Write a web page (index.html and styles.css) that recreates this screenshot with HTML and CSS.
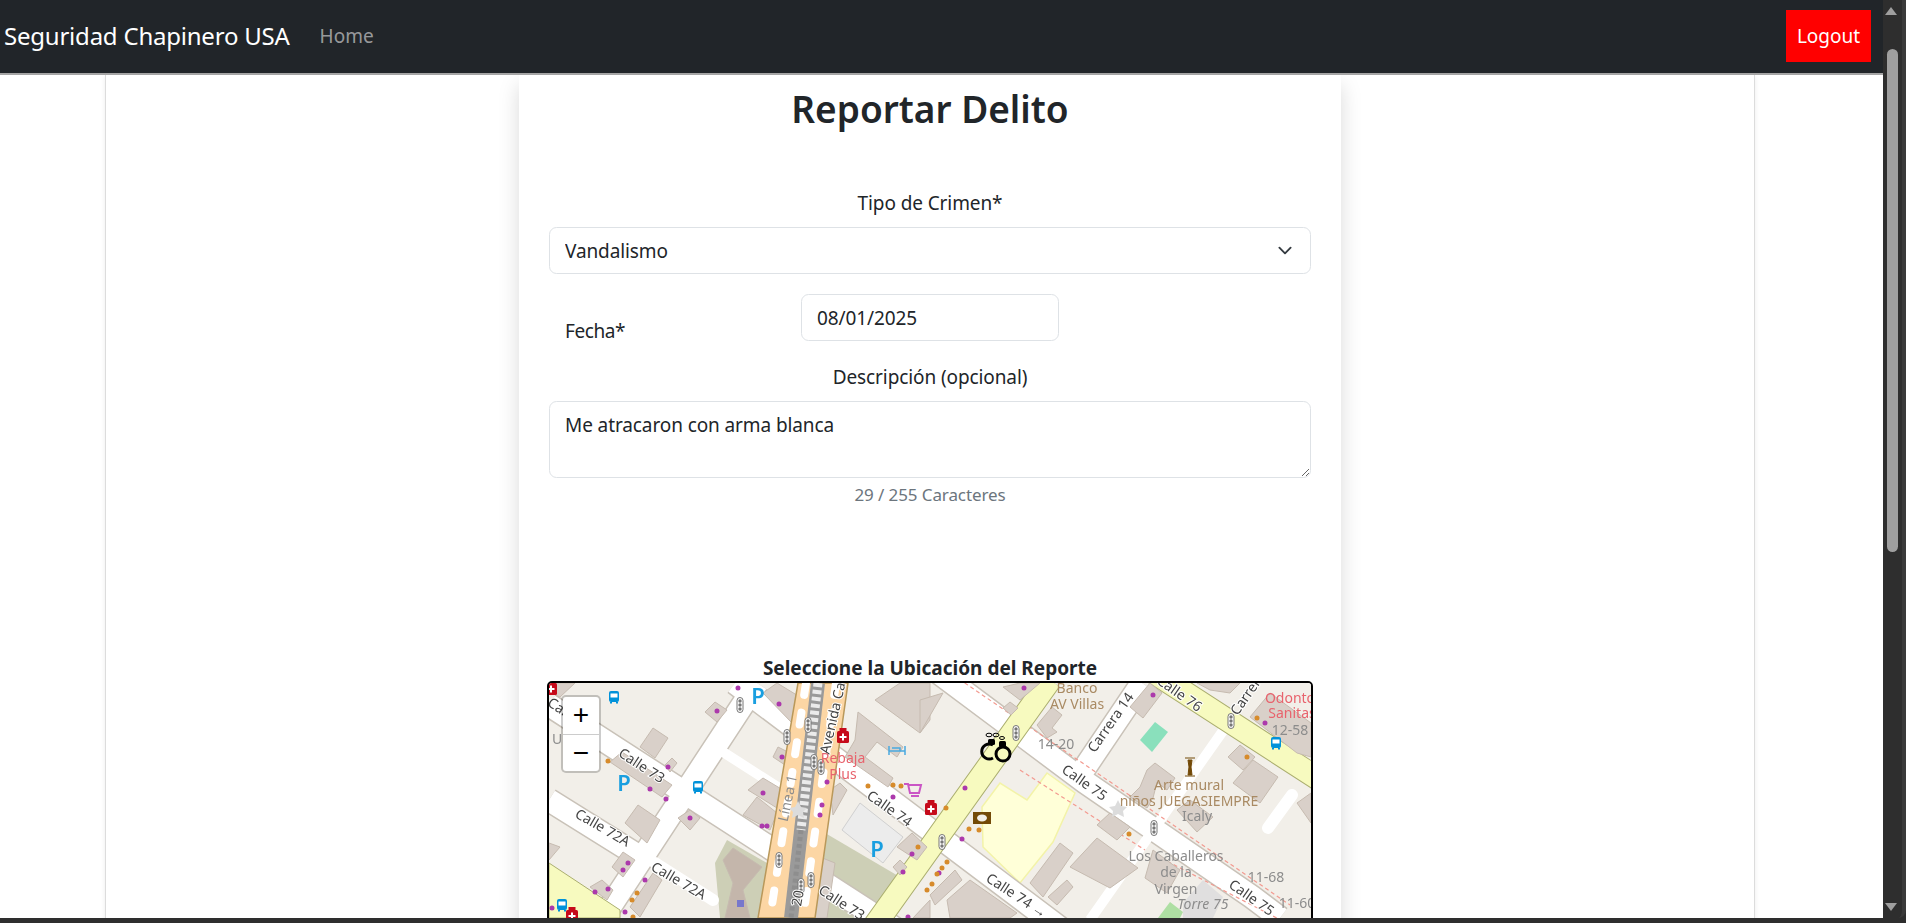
FILE: index.html
```html
<!DOCTYPE html>
<html lang="es">
<head>
  <meta charset="UTF-8" />
  <meta name="viewport" content="width=device-width, initial-scale=1.0"/>
  <title>Reportar Delito</title>
  <link rel="stylesheet" href="styles.css">
</head>
<body>
  <div class="window">
    <div class="viewport">
      <div class="page">
        <nav class="navbar">
          <a class="brand">Seguridad Chapinero USA</a>
          <a class="nav-link">Home</a>
          <button class="logout">Logout</button>
        </nav>

        <main class="content">
          <div class="outer-card">
            <div class="form-card">
              <h2 class="title">Reportar Delito</h2>

              <label class="field-label">Tipo de Crimen*</label>
              <select class="control select-control">
                <option>Vandalismo</option>
              </select>

              <div class="date-row">
                <label class="date-label">Fecha*</label>
                <input class="control date-control" type="text" value="08/01/2025" />
              </div>

              <label class="field-label">Descripción (opcional)</label>
              <textarea class="control text-control">Me atracaron con arma blanca</textarea>
              <div class="counter">29 / 255 Caracteres</div>

              <div class="map-title">Seleccione la Ubicación del Reporte</div>
              <div class="map">
                <svg class="map-tiles" viewBox="549 683 762 235" width="762" height="235">
                  <defs>
                    <g id="signal">
                      <rect x="-3" y="-7.5" width="6" height="15" rx="3" fill="#fff" stroke="#777" stroke-width="1"/>
                      <circle cy="-4" r="1.7" fill="#777"/><circle r="1.7" fill="#777"/><circle cy="4" r="1.7" fill="#777"/>
                    </g>
                    <g id="bus">
                      <rect x="-5" y="-6" width="10" height="11" rx="2" fill="#0092da"/>
                      <rect x="-3.5" y="-3.5" width="7" height="4" fill="#fff"/>
                      <rect x="-4" y="5" width="2" height="1.5" fill="#0092da"/><rect x="2" y="5" width="2" height="1.5" fill="#0092da"/>
                    </g>
                    <g id="pharmacy">
                      <rect x="-6" y="-5" width="12" height="12" rx="1.5" fill="#c60a1a"/>
                      <rect x="-3.5" y="-8" width="7" height="3" fill="#c60a1a"/>
                      <path d="M-3.5 1h7M0-2.500v7" stroke="#fff" stroke-width="2"/>
                    </g>
                    <path id="star" d="M0-9 3-3 9-2 5 2 6 8 0 5-6 8-5 2-9-2-3-3Z" fill="#dcdcdc"/>
                  </defs>

                  <rect x="549" y="683" width="762" height="235" fill="#f2efe9"/>

                  <polygon class="green" points="727,840 767,863 760,918 720,918 715,863"/>
                  <polygon class="green" points="820,830 900,877 878,918 810,918"/>
                  <polygon class="school" points="1047,773 1075,793 1053,842 1020,883 983,847 982,807 1000,783 1027,800"/>
                  <polygon points="1140,740 1155,722 1168,732 1152,752" fill="#8ae0bc"/>
                  <polygon points="1158,918 1170,902 1183,912 1180,918" fill="#aedfa3"/>

                  <g class="casing">
                    <path d="M549 705 905 935M735 683 1060 928M757 683 610 907M549 800 645 860M1142 683 1080 775M935 670 1085 782 1252 897 1280 918"/>
                  </g>
                  <g class="road">
                    <path d="M549 705 905 935M735 683 1060 928M757 683 610 907M549 800 645 860M1142 683 1080 775M935 670 1085 782 1252 897 1280 918"/>
                  </g>
                  <path class="road-thin" d="M723 752 790 795M1225 728 1090 920M600 918 640 860"/>
                  <path class="road-end" d="M655 863 713 900"/>
                  <path class="road-end" d="M1292 795 1268 828"/>
                  <path class="dashed" d="M953 675 1100 775 1290 905M1020 770 1145 850M1155 855 1300 930"/>

                  <polygon class="primary" points="549,863 620,910 620,918 549,918"/>
                  <path class="secondary-case" d="M1050 680 875 925M1150 670 1320 780"/>
                  <path class="secondary" d="M1050 680 875 925M1150 670 1320 780"/>

                  <g class="building">
                    <polygon points="549,683 575,683 560,697 549,692"/>
                    <polygon points="640,747 653,728 668,738 655,758"/>
                    <polygon points="705,712 715,702 727,710 717,722"/>
                    <polygon points="665,765 672,758 677,763 670,772"/>
                    <polygon points="875,700 900,683 930,683 930,720 920,733"/>
                    <polygon points="858,712 903,747 897,757 877,742 865,757 893,778 888,787 845,757 855,740"/>
                    <polygon points="920,700 943,693 920,733"/>
                    <polygon points="1003,687 1020,683 1040,683 1020,700"/>
                    <polygon points="1003,708 1010,702 1018,708 1011,715"/>
                    <polygon points="1037,725 1052,707 1062,715 1052,728 1057,732 1047,738"/>
                    <polygon points="1130,707 1150,683 1162,693 1143,718"/>
                    <polygon points="1147,770 1155,763 1175,778 1167,790 1157,782 1153,798 1147,808 1130,797 1140,787"/>
                    <polygon points="1177,810 1190,800 1213,817 1197,832"/>
                    <polygon points="1228,757 1240,745 1255,757 1243,770"/>
                    <polygon points="1233,783 1253,760 1278,777 1260,803"/>
                    <polygon points="1250,717 1270,693 1311,723 1311,757 1297,753"/>
                    <polygon points="1197,683 1240,683 1230,693 1210,690"/>
                    <polygon points="1097,825 1110,813 1130,827 1117,840"/>
                    <polygon points="1070,867 1097,838 1138,868 1110,888"/>
                    <polygon points="1030,883 1060,843 1073,853 1043,897"/>
                    <polygon points="1048,897 1067,880 1073,887 1057,905"/>
                    <polygon points="947,900 970,880 1017,913 1010,918 950,918"/>
                    <polygon points="930,895 955,870 962,880 935,905"/>
                    <polygon points="1153,850 1180,870 1167,893 1145,878"/>
                    <polygon points="1297,803 1311,793 1311,823"/>
                    <polygon points="748,790 763,778 788,793 777,808"/>
                    <polygon points="743,815 757,797 777,813 770,830"/>
                    <polygon points="763,693 777,683 800,697 792,723"/>
                    <polygon points="773,757 778,747 790,753 785,765"/>
                    <polygon points="625,823 638,805 660,820 647,843"/>
                    <polygon points="610,762 622,752 672,785 662,797"/>
                    <polygon points="678,818 690,810 700,818 690,830"/>
                    <polygon points="549,843 560,847 549,860"/>
                    <polygon points="612,867 623,852 635,860 623,877"/>
                    <polygon points="590,887 602,880 613,890 607,900"/>
                    <polygon points="630,907 653,873 662,880 640,917"/>
                    <polygon points="897,847 912,833 927,847 917,860"/>
                    <polygon points="830,790 840,783 847,790 833,815"/>
                    <polygon points="893,867 900,860 907,867 900,875"/>
                    <polygon points="913,918 930,900 930,918"/>
                    <polygon points="820,857 835,863 827,918 810,918"/>
                    <polygon class="building-dark" points="733,848 762,867 743,890 750,918 725,918 733,883 723,860"/>
                  </g>
                  <polygon points="1183,903 1203,880 1223,897 1213,918 1183,918" fill="#e0dfdf"/>
                  <polygon points="842,830 860,803 903,837 883,863" fill="#ececec" stroke="#d0d0d0"/>
                  <rect x="737" y="900" width="7" height="7" fill="#7777cc"/>

                  <polygon class="avenue" points="798,683 848,683 815,918 758,918"/>
                  <path class="lane" d="M806 683 770 918M836 683 803 918"/>
                  <path class="rail" d="M818 683 791 918"/>
                  <path class="rail-ties" d="M818 683 801 830"/>
                  <path class="rail-ties rail-ties-low" d="M801 830 791 918"/>

                  <path class="dots-purple" d="M717 711h0M738 688h0M779 704h0M782 757h0M827 782h0M822 805h0M820 815h0M763 793h0M762 826h0M767 826h0M690 818h0M668 767h0M650 789h0M666 799h0M628 863h0M623 870h0M645 880h0M608 889h0M595 892h0M625 912h0M893 797h0M903 872h0M912 854h0M908 917h0M552 908h0M1024 688h0M1153 695h0M1265 723h0M965 788h0M962 839h0M939 873h0"/>
                  <path class="dots-orange" d="M608 761h0M637 893h0M632 900h0M633 917h0M868 786h0M893 785h0M901 786h0M918 847h0M1247 757h0M1257 718h0M1129 834h0M946 808h0M969 829h0M979 830h0M947 862h0M942 868h0M937 874h0M932 884h0M927 890h0"/>

                  <use href="#signal" transform="translate(740 705)"/>
                  <use href="#signal" transform="translate(787 737)"/>
                  <use href="#signal" transform="translate(808 725)"/>
                  <use href="#signal" transform="translate(814 762)"/>
                  <use href="#signal" transform="translate(821 767)"/>
                  <use href="#signal" transform="translate(779 860)"/>
                  <use href="#signal" transform="translate(811 880)"/>
                  <use href="#signal" transform="translate(801 886)"/>
                  <use href="#signal" transform="translate(1016 733)"/>
                  <use href="#signal" transform="translate(1231 721)"/>
                  <use href="#signal" transform="translate(1154 828)"/>
                  <use href="#signal" transform="translate(942 842)"/>

                  <use href="#bus" transform="translate(614 697)"/>
                  <use href="#bus" transform="translate(698 787)"/>
                  <use href="#bus" transform="translate(562 905)"/>
                  <use href="#bus" transform="translate(1276 743)"/>

                  <use href="#pharmacy" transform="translate(843 736)"/>
                  <use href="#pharmacy" transform="translate(931 808)"/>
                  <use href="#pharmacy" transform="translate(551 688)"/>
                  <use href="#pharmacy" transform="translate(572 915)"/>

                  <use href="#star" transform="translate(798 810)"/>
                  <use href="#star" transform="translate(1118 809)"/>

                  <text class="map-parking" x="758" y="695">P</text>
                  <text class="map-parking" x="624" y="782">P</text>
                  <text class="map-parking" x="877" y="848">P</text>

                  <!-- bed, cart, bank, monument -->
                  <path d="M889 746v9M889 751h16v4M905 746v5M892 748h8v3" fill="none" stroke="#4aa9e0" stroke-width="1.500"/>
                  <path d="M904 784h4l2 9h9l2-8h-13M911 796h8" fill="none" stroke="#ca55c5" stroke-width="2"/>
                  <rect x="973" y="812" width="18" height="12" fill="#734a08"/>
                  <ellipse cx="982" cy="818" rx="5" ry="3.500" fill="#f2efe9"/>
                  <path d="M1185 758h10M1185 776h10M1188 760h4l-1 7 1 8h-4l1-8Z" fill="#734a08" stroke="#734a08"/>

                  <g class="map-street">
                    <text transform="translate(642 765) rotate(33)">Calle 73</text>
                    <text transform="translate(603 827) rotate(30)">Calle 72A</text>
                    <text transform="translate(679 880) rotate(30)">Calle 72A</text>
                    <text transform="translate(842 902) rotate(33)">Calle 73</text>
                    <text transform="translate(890 808) rotate(35)">Calle 74</text>
                    <text transform="translate(1017 895) rotate(33)">Calle 74 →</text>
                    <text transform="translate(1085 782) rotate(35)">Calle 75</text>
                    <text transform="translate(1252 897) rotate(35)">Calle 75</text>
                    <text transform="translate(1180 693) rotate(35)">Calle 76</text>
                    <text transform="translate(1110 722) rotate(-55)">Carrera 14</text>
                    <text transform="translate(1247 693) rotate(-55)">Carrera</text>
                    <text transform="translate(832 718) rotate(-77)">Avenida Ca</text>
                    <text transform="translate(558 706) rotate(33)">Cal</text>
                    <text transform="translate(797 898) rotate(-80)">20</text>
                  </g>
                  <g class="map-grey">
                    <text x="557" y="738">U</text>
                    <text transform="translate(787 798) rotate(-78)">Línea 1</text>
                    <text x="1056" y="743">14-20</text>
                    <text x="1290" y="729">12-58</text>
                    <text x="1266" y="876">11-68</text>
                    <text x="1297" y="902">11-60</text>
                    <text x="1197" y="815">Icaly</text>
                    <text x="1176" y="855">Los Caballeros</text>
                    <text x="1176" y="871">de la</text>
                    <text x="1176" y="888">Virgen</text>
                    <text class="map-italic" x="1203" y="903">Torre 75</text>
                  </g>
                  <g class="map-brown">
                    <text x="1077" y="687">Banco</text>
                    <text x="1077" y="703">AV Villas</text>
                    <text x="1189" y="784">Arte mural</text>
                    <text x="1189" y="800">niños JUEGASIEMPRE</text>
                  </g>
                  <g class="map-red">
                    <text x="1290" y="697">Odonto</text>
                    <text x="1292" y="712">Sanitas</text>
                    <text x="843" y="757">Rebaja</text>
                    <text x="843" y="773">Plus</text>
                  </g>

                  <!-- handcuffs marker -->
                  <g fill="none" stroke="#000">
                    <ellipse cx="989" cy="735" rx="3" ry="1.800" stroke-width="1"/>
                    <ellipse cx="996" cy="735" rx="3" ry="1.800" stroke-width="1"/>
                    <ellipse cx="1002" cy="738" rx="2.500" ry="1.500" stroke-width="1"/>
                    <path d="M993 745A7.500 7.500 0 1 0 993 758" stroke-width="3"/>
                    <circle cx="1003" cy="754" r="7" stroke-width="3"/>
                  </g>
                  <rect x="988" y="739" width="7" height="6" rx="1.500"/>
                  <rect x="999" y="741" width="7" height="6" rx="1.500"/>
                </svg>

                <div class="zoom-control">
                  <div class="zoom-btn">+</div>
                  <div class="zoom-btn">−</div>
                </div>
              </div>
            </div>
          </div>
        </main>
      </div>

      <div class="scrollbar">
        <div class="arrow-up"></div>
        <div class="scroll-track"><div class="scroll-thumb"></div></div>
        <div class="arrow-down"></div>
      </div>
    </div>
    <div class="window-bottom"></div>
  </div>
</body>
</html>
```

FILE: styles.css
```css
* {
  box-sizing: border-box;
}

body {
  margin: 0;
  font-family: "Noto Sans", "Open Sans", sans-serif;
  font-size: 20px;
  color: #212529;
  background: #2e2e2e;
}

.window {
  height: 100vh;
  display: flex;
  flex-direction: column;
  overflow: hidden;
}

.viewport {
  flex: 1;
  display: flex;
  min-height: 0;
}

.page {
  flex: 1;
  display: flex;
  flex-direction: column;
  min-width: 0;
  background: #fff;
}

.window-bottom {
  height: 5px;
  background: #2e2e2e;
}

/* navbar */
.navbar {
  height: 75px;
  flex: none;
  display: flex;
  align-items: center;
  padding: 0 12px 2px 4px;
  background: #212529;
  border-bottom: 2px solid #a5a5a5;
}

.brand {
  font-size: 24px;
  letter-spacing: -0.22px;
  color: #fff;
}

.nav-link {
  margin-left: 30px;
  font-size: 19px;
  color: rgba(255,255,255,0.55);
}

.logout {
  margin-left: auto;
  width: 85px;
  height: 52px;
  border: none;
  background: #f00;
  color: #fff;
  font-family: inherit;
  font-size: 19px;
}

/* cards */
.content {
  flex: 1;
  min-height: 0;
  overflow: hidden;
}

.outer-card {
  width: 1650px;
  min-height: 100%;
  margin-left: 105px;
  border-left: 1px solid #dcdcdc;
  border-right: 1px solid #dcdcdc;
  box-shadow: 0 2px 5px rgba(0,0,0,0.08);
}

.form-card {
  width: 822px;
  margin: 0 auto;
  padding: 10px 30px 30px;
  text-align: center;
  box-shadow: 0 10px 20px rgba(0,0,0,0.15);
}

.title {
  margin: 0 0 55px;
  font-size: 37px;
  line-height: 48px;
  font-weight: 600;
}

.field-label {
  display: block;
  height: 30px;
  margin-bottom: 9px;
  font-size: 19px;
  line-height: 30px;
  letter-spacing: -0.1px;
}

.control {
  display: block;
  border: 1px solid #dee2e6;
  border-radius: 7.5px;
  background: #fff;
  color: #212529;
  font-family: inherit;
  font-size: 19px;
  letter-spacing: -0.1px;
  outline: none;
}

.select-control {
  width: 100%;
  height: 47px;
  padding: 0 15px 0 15px;
  appearance: none;
  background-image: url("data:image/svg+xml,%3csvg xmlns='http://www.w3.org/2000/svg' viewBox='0 0 16 16'%3e%3cpath fill='none' stroke='%23343a40' stroke-linecap='round' stroke-linejoin='round' stroke-width='2' d='m2 5 6 6 6-6'/%3e%3c/svg%3e");
  background-repeat: no-repeat;
  background-position: right 15px center;
  background-size: 20px 15px;
}

.date-row {
  display: flex;
  align-items: flex-start;
  margin: 20px 0 16px;
}

.date-label {
  width: 252px;
  padding: 22px 0 0 16px;
  font-size: 19px;
  line-height: 30px;
  letter-spacing: -0.4px;
  text-align: left;
}

.date-control {
  width: 258px;
  height: 47px;
  padding: 0 15px;
}

.text-control {
  width: 100%;
  height: 77px;
  padding: 8px 15px;
  line-height: 30px;
  resize: vertical;
}

.counter {
  height: 30px;
  margin: 2px 0 145px;
  font-size: 17px;
  line-height: 30px;
  letter-spacing: -0.1px;
  color: #6c757d;
}

.map-title {
  height: 26px;
  font-size: 19px;
  font-weight: 700;
  line-height: 26px;
}

/* map */
.map {
  position: relative;
  width: 766px;
  height: 500px;
  margin-left: -2px;
  border: 2px solid #000;
  border-radius: 5px;
  overflow: hidden;
}

.map-tiles {
  display: block;
  filter: blur(0.35px);
}

.zoom-control {
  position: absolute;
  top: 12px;
  left: 12px;
  width: 40px;
  background: #fff;
  border: 2px solid rgba(0,0,0,0.2);
  border-radius: 5px;
  background-clip: padding-box;
}

.zoom-btn {
  height: 37px;
  font-family: "Liberation Sans", sans-serif;
  font-size: 28px;
  line-height: 36px;
  text-align: center;
  color: #000;
}

.zoom-btn + .zoom-btn {
  border-top: 1px solid #ccc;
}

.green { fill: #cdcfb6; }
.school { fill: #ffffd8; stroke: #f3f3a8; stroke-width: 1.5; }
.building polygon { fill: #d9d0c9; stroke: #c6bbb0; stroke-width: 1; }
.building .building-dark { fill: #c4b6ab; }
.casing path { fill: none; stroke: #c9c2b8; stroke-width: 25; }
.road path { fill: none; stroke: #fff; stroke-width: 22; }
.road-thin { fill: none; stroke: #fff; stroke-width: 10; }
.road-end { fill: none; stroke: #fff; stroke-width: 12; stroke-linecap: round; }
.dashed { fill: none; stroke: #f39a90; stroke-width: 1.2; stroke-dasharray: 4 3; }
.primary { fill: #f7fabf; stroke: #abae6f; }
.secondary { fill: none; stroke: #f7fabf; stroke-width: 22; }
.secondary-case { fill: none; stroke: #abae6f; stroke-width: 24; }
.avenue { fill: #fcd6a4; stroke: #b9985a; stroke-width: 1.5; }
.lane { fill: none; stroke: #fff; stroke-width: 8; stroke-linecap: round; stroke-dasharray: 12 18; }
.rail { fill: none; stroke: #9a9a9a; stroke-width: 14; }
.rail-ties { fill: none; stroke: #fff; stroke-width: 9; stroke-dasharray: 4 3; opacity: 0.8; }
.rail-ties-low { stroke: #777; stroke-width: 5; opacity: 0.35; }
.dots-purple { fill: none; stroke: #ac39ac; stroke-width: 5; stroke-linecap: round; }
.dots-orange { fill: none; stroke: #d78b2b; stroke-width: 5; stroke-linecap: round; }

.map-tiles text {
  font-family: "Noto Sans", sans-serif;
  font-size: 14px;
  text-anchor: middle;
  dominant-baseline: central;
}

.map-street text {
  fill: #444;
  stroke: #fff;
  stroke-width: 2px;
  paint-order: stroke;
}

.map-grey text { fill: #8c8c8c; }
.map-brown text { fill: #a98a63; }
.map-red text { fill: #e8636d; }
.map-tiles .map-italic { font-style: italic; }

.map-tiles .map-parking {
  font-size: 22px;
  font-weight: 600;
  fill: #1a9fe0;
}

/* scrollbar */
.scrollbar {
  width: 23px;
  flex: none;
  position: relative;
  display: flex;
  flex-direction: column;
  align-items: center;
  padding-right: 4px;
  background: #2e2e2e;
  border-right: 4px solid #3a3a3a;
  border-bottom-right-radius: 8px;
}

.scroll-track {
  flex: 1;
  width: 100%;
  padding: 34px 4px 0;
}

.scroll-thumb {
  width: 11px;
  height: 503px;
  border-radius: 6px;
  background: #9f9f9f;
}

.arrow-up,
.arrow-down {
  width: 0;
  height: 0;
  border-left: 6px solid transparent;
  border-right: 6px solid transparent;
}

.arrow-up {
  margin-top: 7px;
  border-bottom: 8px solid #9f9f9f;
}

.arrow-down {
  margin-bottom: 7px;
  border-top: 8px solid #9f9f9f;
}
```
